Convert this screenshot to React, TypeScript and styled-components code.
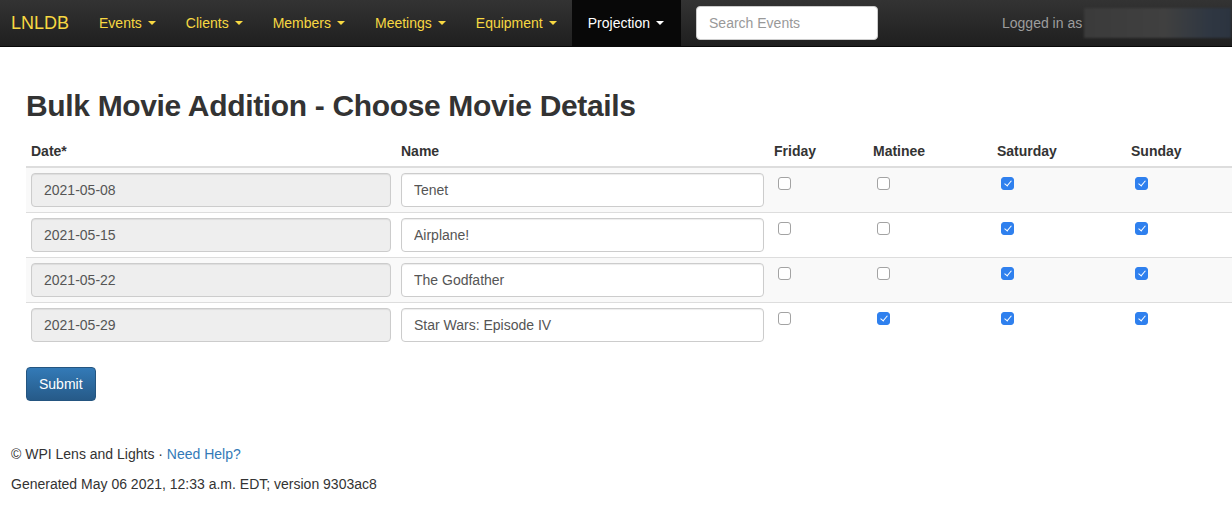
import React from "react";
import styled, { createGlobalStyle } from "styled-components";

const GlobalStyle = createGlobalStyle`
  html, body { margin: 0; padding: 0; background: #fff; }
  body {
    font-family: "Liberation Sans", Arial, Helvetica, sans-serif;
    font-size: 14px;
    line-height: 20px;
    color: #333;
    overflow-x: hidden;
  }
  * { box-sizing: border-box; }
`;

const Navbar = styled.nav`
  height: 47px;
  display: flex;
  align-items: center;
  background: linear-gradient(to bottom, #333 0%, #1f1f1f 100%);
  border-bottom: 1px solid #080808;
  overflow: hidden;
  white-space: nowrap;
`;

const Brand = styled.a`
  color: #f7d842;
  font-size: 18px;
  line-height: 20px;
  padding: 0 15px 0 11px;
  text-decoration: none;
`;

const NavList = styled.ul`
  display: flex;
  align-self: stretch;
  margin: 0;
  padding: 0;
  list-style: none;
`;

const NavItem = styled.li<{ $active?: boolean }>`
  display: flex;
  align-items: center;
  padding: 0 ${(p) => (p.$active ? "17px 0 16px" : "15px")};
  color: ${(p) => (p.$active ? "#fff" : "#f7d842")};
  background: ${(p) => (p.$active ? "#080808" : "transparent")};
  font-size: 14px;
`;

const Caret = styled.span`
  display: inline-block;
  width: 0;
  height: 0;
  margin-left: 6px;
  border-top: 4px solid currentColor;
  border-left: 4px solid transparent;
  border-right: 4px solid transparent;
`;

const SearchInput = styled.input`
  margin-left: 15px;
  width: 182px;
  height: 34px;
  padding: 6px 12px;
  border: 1px solid #ccc;
  border-radius: 4px;
  font: inherit;
  font-size: 14px;
  color: #555;
  background: #fff;
  &::placeholder { color: #999; }
`;

const LoggedIn = styled.div`
  margin-left: 124px;
  display: flex;
  align-items: center;
  color: #9d9d9d;
  font-size: 14px;
`;

const Redacted = styled.span`
  display: inline-block;
  width: 147px;
  height: 30px;
  margin-left: 2px;
  background: linear-gradient(to right, #3b3b3b 0%, #404040 55%, #2f3742 85%, #2c3440 100%);
  filter: blur(1px);
`;

const Main = styled.main`
  padding-left: 26px;
`;

const Title = styled.h2`
  margin: 42px 0 14px;
  font-size: 30px;
  line-height: 33px;
  font-weight: 700;
  letter-spacing: -0.34px;
  color: #333;
`;

const Table = styled.table`
  border-collapse: collapse;
  border-spacing: 0;
  table-layout: fixed;
  width: 1206px;
`;

const Th = styled.th`
  text-align: left;
  font-weight: 700;
  padding: 5px 5px 5px;
  line-height: 20px;
  border-bottom: 2px solid #ddd;
  vertical-align: bottom;
`;

const Tr = styled.tr`
  &:nth-child(odd) { background: #f9f9f9; }
`;

const Td = styled.td`
  padding: 5px;
  border-top: 1px solid #ddd;
  vertical-align: top;
`;

const TextInput = styled.input<{ $readonly?: boolean }>`
  display: block;
  width: 100%;
  height: 34px;
  padding: 6px 12px;
  font: inherit;
  font-size: 14px;
  color: #555;
  border: 1px solid #ccc;
  border-radius: 4px;
  background: ${(p) => (p.$readonly ? "#eee" : "#fff")};
  box-shadow: inset 0 1px 1px rgba(0, 0, 0, 0.075);
`;

const Check = styled.input`
  appearance: none;
  -webkit-appearance: none;
  display: block;
  position: relative;
  width: 13px;
  height: 13px;
  margin: 4px 0 0 4px;
  border: 1px solid #a3a3a3;
  border-radius: 3px;
  background: #fff;
  &:checked {
    background: #2f80ee;
    border-color: #2f80ee;
  }
  &:checked::after {
    content: "";
    position: absolute;
    left: 3.5px;
    top: 1px;
    width: 3px;
    height: 6px;
    border: solid #fff;
    border-width: 0 1.6px 1.6px 0;
    transform: rotate(40deg);
  }
`;

const SubmitButton = styled.button`
  margin-top: 20px;
  height: 34px;
  padding: 6px 12px;
  font: inherit;
  font-size: 14px;
  color: #fff;
  border: 1px solid #245580;
  border-radius: 4px;
  background: linear-gradient(to bottom, #337ab7 0%, #265a88 100%);
`;

const Footer = styled.footer`
  margin-top: 43px;
  padding-left: 11px;
  display: flex;
  flex-direction: column;
  gap: 10px;
`;

const Link = styled.a`
  color: #337ab7;
  text-decoration: none;
`;

const rows = [
  { date: "2021-05-08", name: "Tenet", f: false, m: false, sa: true, su: true },
  { date: "2021-05-15", name: "Airplane!", f: false, m: false, sa: true, su: true },
  { date: "2021-05-22", name: "The Godfather", f: false, m: false, sa: true, su: true },
  { date: "2021-05-29", name: "Star Wars: Episode IV", f: false, m: true, sa: true, su: true },
];

const navItems = ["Events", "Clients", "Members", "Meetings", "Equipment"];

export default function App() {
  return (
    <>
      <GlobalStyle />
      <Navbar>
        <Brand>LNLDB</Brand>
        <NavList>
          {navItems.map((n) => (
            <NavItem key={n}>
              {n}
              <Caret />
            </NavItem>
          ))}
          <NavItem $active>
            Projection
            <Caret />
          </NavItem>
        </NavList>
        <SearchInput placeholder="Search Events" />
        <LoggedIn>
          Logged in as
          <Redacted />
        </LoggedIn>
      </Navbar>
      <Main>
        <Title>Bulk Movie Addition - Choose Movie Details</Title>
        <Table>
          <colgroup>
            <col style={{ width: 370 }} />
            <col style={{ width: 373 }} />
            <col style={{ width: 99 }} />
            <col style={{ width: 124 }} />
            <col style={{ width: 134 }} />
            <col style={{ width: 106 }} />
          </colgroup>
          <thead>
            <tr>
              <Th>Date*</Th>
              <Th>Name</Th>
              <Th>Friday</Th>
              <Th>Matinee</Th>
              <Th>Saturday</Th>
              <Th>Sunday</Th>
            </tr>
          </thead>
          <tbody>
            {rows.map((r) => (
              <Tr key={r.date}>
                <Td>
                  <TextInput $readonly readOnly defaultValue={r.date} />
                </Td>
                <Td>
                  <TextInput defaultValue={r.name} />
                </Td>
                <Td>
                  <Check type="checkbox" defaultChecked={r.f} />
                </Td>
                <Td>
                  <Check type="checkbox" defaultChecked={r.m} />
                </Td>
                <Td>
                  <Check type="checkbox" defaultChecked={r.sa} />
                </Td>
                <Td>
                  <Check type="checkbox" defaultChecked={r.su} />
                </Td>
              </Tr>
            ))}
          </tbody>
        </Table>
        <SubmitButton>Submit</SubmitButton>
      </Main>
      <Footer>
        <div>
          © WPI Lens and Lights · <Link href="#">Need Help?</Link>
        </div>
        <div>Generated May 06 2021, 12:33 a.m. EDT; version 9303ac8</div>
      </Footer>
    </>
  );
}
